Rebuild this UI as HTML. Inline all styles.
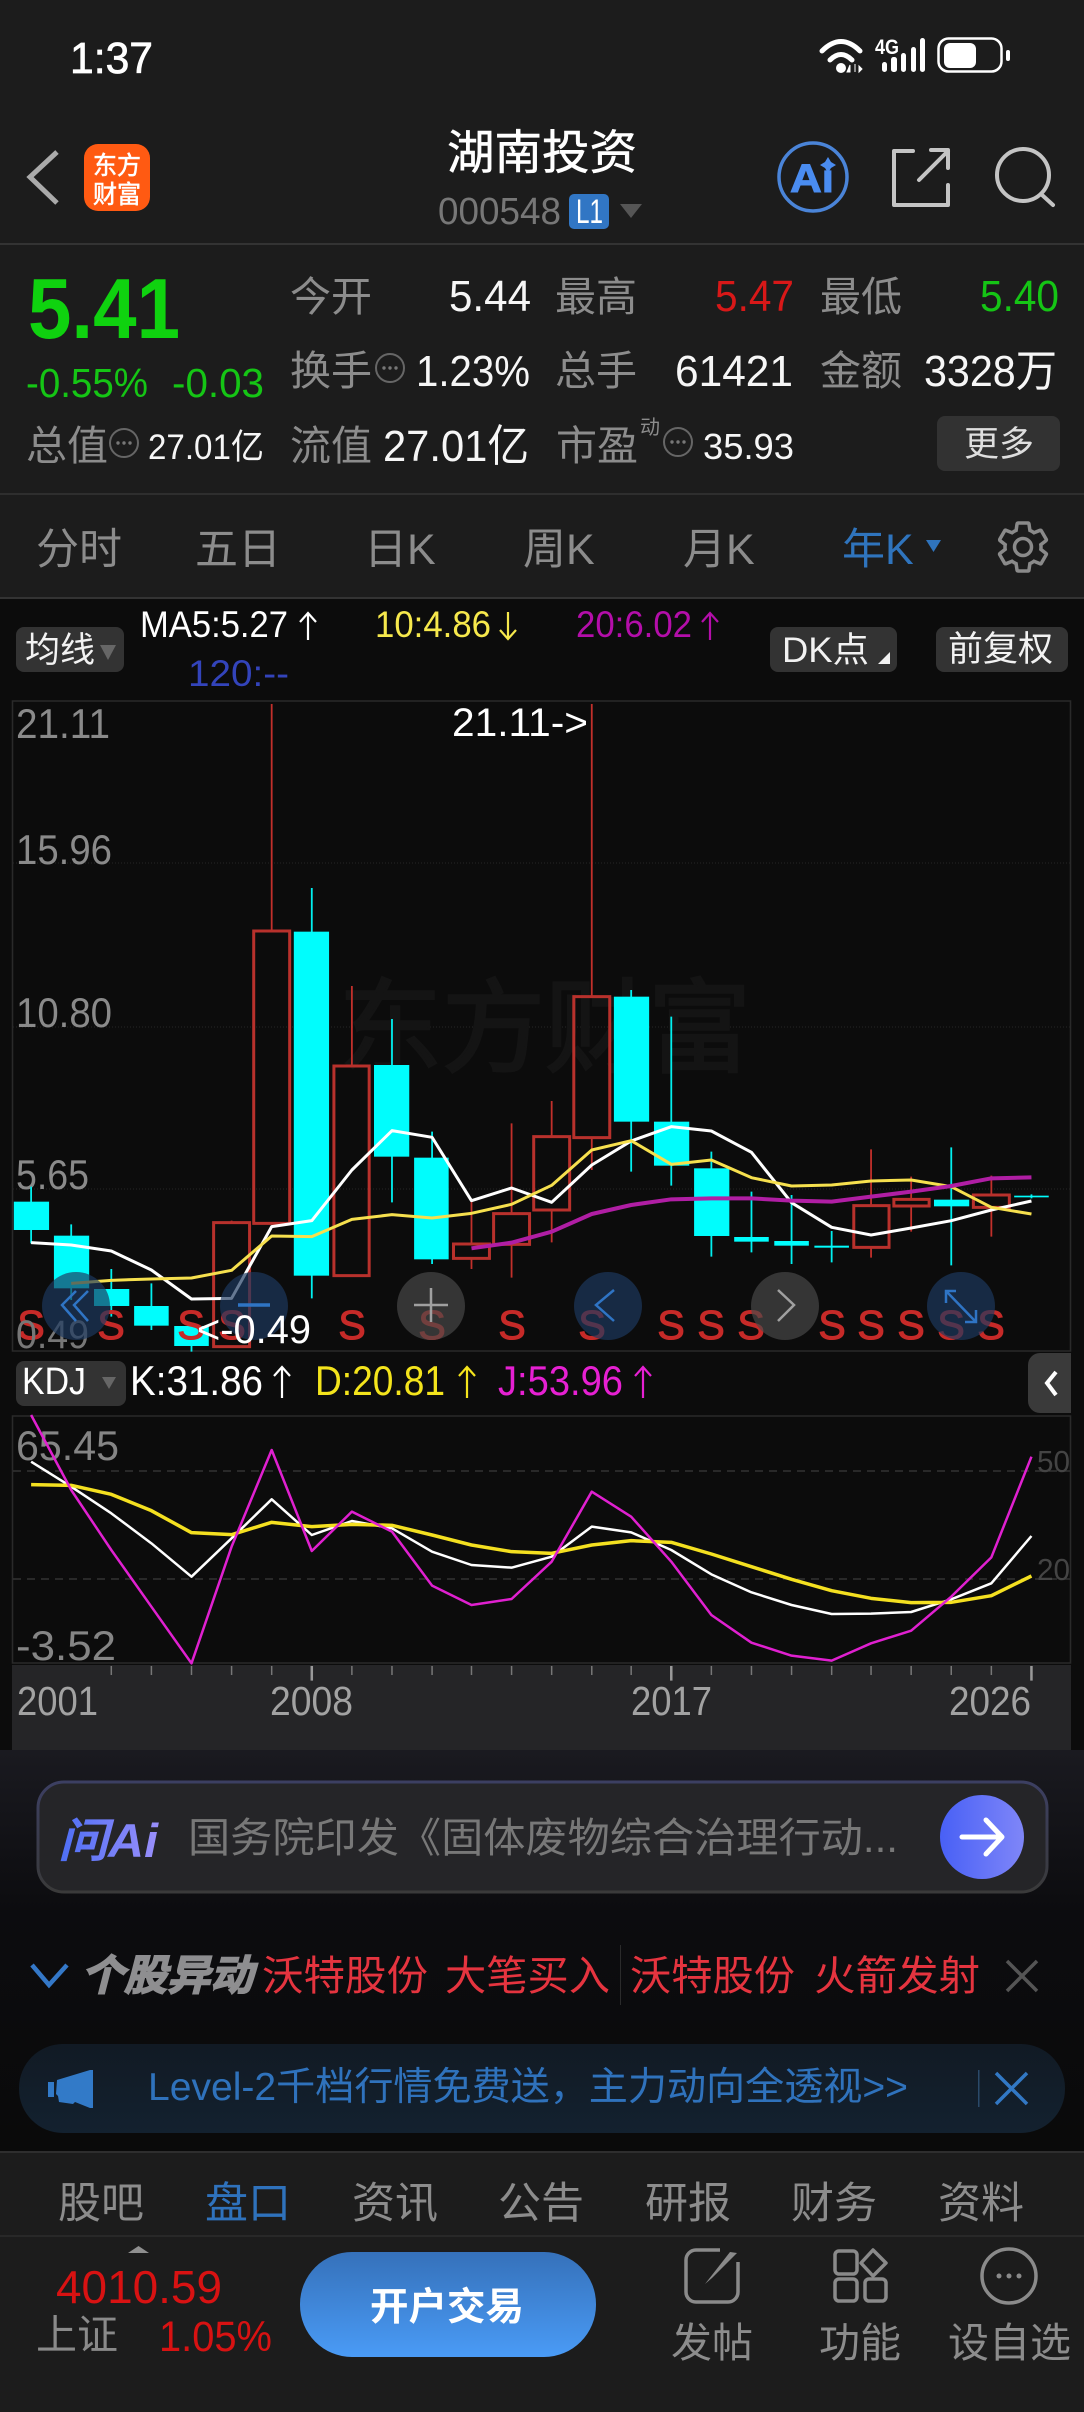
<!DOCTYPE html>
<html lang="zh"><head><meta charset="utf-8"><title>湖南投资</title>
<style>
html,body{margin:0;padding:0;background:#0c0c0c;width:1084px;height:2412px;overflow:hidden}
svg{display:block;position:absolute;left:0;top:0}
text{font-family:"Liberation Sans","Noto Sans CJK SC",sans-serif;white-space:pre}
.n{vector-effect:non-scaling-stroke;fill:none}
.g{fill:#8c8c8c}.w{fill:#f6f6f6}.cj{font-size:41px}
</style></head><body>
<svg width="1084" height="2412" viewBox="0 0 1084 2412">
<defs>
<linearGradient id="bg" x1="0" y1="0" x2="0" y2="1"><stop offset="0" stop-color="#1a1a20"/><stop offset=".4" stop-color="#0c0c0f"/><stop offset="1" stop-color="#0a0a0a"/></linearGradient>
<linearGradient id="aib" x1="0" y1="0" x2="0" y2="1"><stop offset="0" stop-color="#3c3f62"/><stop offset="1" stop-color="#3a3a3a"/></linearGradient>
<linearGradient id="arr" x1="0" y1="0" x2="1" y2="0"><stop offset="0" stop-color="#4860f6"/><stop offset="1" stop-color="#7f86f8"/></linearGradient>
<linearGradient id="ai" x1="0" y1="0" x2="1" y2="0"><stop offset="0" stop-color="#4c6ef5"/><stop offset="1" stop-color="#9a8ffb"/></linearGradient>
<linearGradient id="btn" x1="0" y1="0" x2="0" y2="1"><stop offset="0" stop-color="#3571ba"/><stop offset="1" stop-color="#4a9bf6"/></linearGradient>
<linearGradient id="lv" x1="0" y1="0" x2="0" y2="1"><stop offset="0" stop-color="#111a24"/><stop offset="1" stop-color="#13212f"/></linearGradient>
</defs>

<!-- backgrounds -->
<rect width="1084" height="598" fill="#1c1c1c"/>
<rect y="598" width="1084" height="1152" fill="#0c0c0c"/>
<rect y="1750" width="1084" height="402" fill="url(#bg)"/>
<rect y="2152" width="1084" height="260" fill="#1c1c1c"/>
<rect y="243" width="1084" height="2" fill="#333"/>
<rect y="493" width="1084" height="2" fill="#2e2e2e"/>
<rect y="597" width="1084" height="2" fill="#333"/>
<rect x="12" y="1665" width="1059" height="85" fill="#252527"/>

<!-- status bar -->
<text x="70" y="73" font-size="44" textLength="83" lengthAdjust="spacingAndGlyphs" fill="#fff" stroke="#fff" stroke-width=".7">1:37</text>
<g fill="none" stroke="#fff" stroke-width="5" stroke-linecap="round">
<path d="M822 51 Q841 32 860 51"/><path d="M830 60 Q841 49 852 60"/></g>
<circle cx="841" cy="68" r="5" fill="#fff"/>
<path d="M850 72v-7l-3 7zM855 64v8M859 66l3 3-3 3z" fill="#fff" stroke="#fff" stroke-width="1"/>
<text x="875" y="54" font-size="21" font-weight="bold" textLength="24" lengthAdjust="spacingAndGlyphs" fill="#fff">4G</text>
<g fill="#fff"><rect x="882" y="62" width="5" height="10" rx="2.5"/><rect x="891" y="57" width="6" height="15" rx="2.5"/><rect x="901" y="53" width="5" height="19" rx="2.5"/><rect x="911" y="47" width="5" height="25" rx="2.5"/><rect x="920" y="38" width="5" height="34" rx="2.5"/></g>
<rect x="938.5" y="38.5" width="63" height="33" rx="10" fill="none" stroke="#fff" stroke-width="2.5"/>
<rect x="944" y="43" width="32" height="25" rx="6" fill="#fff"/>
<rect x="1006" y="50" width="4" height="11" rx="2" fill="#fff"/>

<!-- nav -->
<path d="M57 152 L30 177 L57 203" fill="none" stroke="#aaa" stroke-width="5"/>
<rect x="84" y="144" width="66" height="67" rx="14" fill="#ff5a12"/>
<text x="93" y="174" font-size="25" fill="#fff" textLength="48" lengthAdjust="spacingAndGlyphs" stroke="#fff" stroke-width=".6">东方</text>
<text x="93" y="203" font-size="25" fill="#fff" textLength="48" lengthAdjust="spacingAndGlyphs" stroke="#fff" stroke-width=".6">财富</text>
<text x="447" y="169" font-size="47" fill="#fff" textLength="190" lengthAdjust="spacingAndGlyphs" stroke="#fff" stroke-width=".5">湖南投资</text>
<text x="438" y="224" font-size="38" fill="#777" textLength="123" lengthAdjust="spacingAndGlyphs">000548</text>
<rect x="569" y="194" width="40" height="35" rx="5" fill="#3176c4"/>
<text x="576" y="223" font-size="34" fill="#fff" textLength="27" lengthAdjust="spacingAndGlyphs">L1</text>
<path d="M620 204h22l-11 14z" fill="#555"/>
<circle cx="813" cy="177" r="34" fill="none" stroke="#4a84d8" stroke-width="3.5"/>
<text x="790" y="192" font-size="40" font-weight="bold" fill="#4a8cf0" textLength="44" lengthAdjust="spacingAndGlyphs" stroke="#4a8cf0" stroke-width="1">Ai</text>
<rect x="821" y="160" width="13" height="10" fill="#1c1c1c"/>
<path d="M828 157l3 5 5 3-5 3-3 5-3-5-5-3 5-3z" fill="#4a8cf0"/>
<g fill="none" stroke="#c4c4c4" stroke-width="4" stroke-linecap="round" stroke-linejoin="round">
<path d="M913 151H894V205H948V185"/><path d="M919 180L948 151"/><path d="M931 150H948V168"/>
<circle cx="1023" cy="175" r="26"/><path d="M1041 194L1053 205"/></g>

<!-- quote -->
<text x="28" y="338" font-size="85" font-weight="bold" fill="#0fd20f" textLength="152" lengthAdjust="spacingAndGlyphs">5.41</text>
<text x="26" y="397" font-size="41" fill="#15c515" textLength="122" lengthAdjust="spacingAndGlyphs">-0.55%</text>
<text x="172" y="397" font-size="41" fill="#15c515" textLength="92" lengthAdjust="spacingAndGlyphs">-0.03</text>

<g class="g cj"><text x="290" y="311" font-size="41">今开</text><text x="555" y="311" font-size="41">最高</text><text x="820" y="311" font-size="41">最低</text>
<text x="290" y="385" font-size="41">换手</text><text x="555" y="385" font-size="41">总手</text><text x="820" y="385" font-size="41">金额</text>
<text x="26" y="460" font-size="41">总值</text><text x="290" y="460" font-size="41">流值</text><text x="556" y="460" font-size="41">市盈</text>
<text x="640" y="434" font-size="20">动</text></g>

<g font-size="44"><text class="w" x="449" y="311" textLength="82" lengthAdjust="spacingAndGlyphs">5.44</text>
<text x="715" y="311" fill="#d81818" textLength="79" lengthAdjust="spacingAndGlyphs">5.47</text>
<text x="980" y="311" fill="#15c515" textLength="79" lengthAdjust="spacingAndGlyphs">5.40</text>
<text class="w" x="416" y="386" textLength="114" lengthAdjust="spacingAndGlyphs">1.23%</text>
<text class="w" x="675" y="386" textLength="118" lengthAdjust="spacingAndGlyphs">61421</text>
<text class="w" x="924" y="386" textLength="133" lengthAdjust="spacingAndGlyphs">3328万</text>
<text class="w" x="383" y="461" textLength="146" lengthAdjust="spacingAndGlyphs">27.01亿</text></g>
<text class="w" x="148" y="459" font-size="35" textLength="116" lengthAdjust="spacingAndGlyphs">27.01亿</text>
<text class="w" x="703" y="459" font-size="36" textLength="91" lengthAdjust="spacingAndGlyphs">35.93</text>

<g fill="none" stroke="#666" stroke-width="2"><circle cx="390" cy="368" r="14"/><circle cx="124" cy="443" r="14"/><circle cx="678" cy="442" r="14"/></g>
<g fill="#777"><circle cx="384" cy="368" r="1.7"/><circle cx="390" cy="368" r="1.7"/><circle cx="396" cy="368" r="1.7"/><circle cx="118" cy="443" r="1.7"/><circle cx="124" cy="443" r="1.7"/><circle cx="130" cy="443" r="1.7"/><circle cx="672" cy="442" r="1.7"/><circle cx="678" cy="442" r="1.7"/><circle cx="684" cy="442" r="1.7"/></g>
<rect x="937" y="416" width="123" height="55" rx="8" fill="#323232"/>
<text x="964" y="456" font-size="35" fill="#dedede">更多</text>

<!-- tabs -->
<g class="g" font-size="43"><text x="36" y="564">分时</text><text x="195" y="564">五日</text><text x="364" y="564">日K</text><text x="523" y="564">周K</text><text x="683" y="564">月K</text></g>
<text x="842" y="564" font-size="43" fill="#2f74bd">年K</text>
<path d="M926 540h15l-7.500 12z" fill="#2f74bd"/>
<g transform="translate(993 517) scale(2.5)" fill="none" stroke="#8a8a8a" stroke-width="1.4"><path d="M19.14 12.94c.04-.3.06-.61.06-.94 0-.32-.02-.64-.07-.94l2.03-1.58c.18-.14.23-.41.12-.61l-1.92-3.32c-.12-.22-.37-.29-.59-.22l-2.39.96c-.5-.38-1.03-.7-1.62-.94l-.36-2.54c-.04-.24-.24-.41-.48-.41h-3.84c-.24 0-.43.17-.47.41l-.36 2.54c-.59.24-1.13.57-1.62.94l-2.39-.96c-.22-.08-.47 0-.59.22L2.74 8.87c-.12.21-.08.47.12.61l2.03 1.58c-.05.3-.09.63-.09.94s.02.64.07.94l-2.03 1.58c-.18.14-.23.41-.12.61l1.92 3.32c.12.22.37.29.59.22l2.39-.96c.5.38 1.03.7 1.62.94l.36 2.54c.05.24.24.41.48.41h3.84c.24 0 .44-.17.47-.41l.36-2.54c.59-.24 1.13-.56 1.62-.94l2.39.96c.22.08.47 0 .59-.22l1.92-3.32c.12-.22.07-.47-.12-.61l-2.01-1.58z"/><circle cx="12" cy="12" r="3.4"/></g>

<!-- MA legend -->
<rect x="16" y="627" width="108" height="45" rx="8" fill="#333"/>
<text x="25" y="662" font-size="35" fill="#f2f2f2">均线</text><path d="M100 645h16l-8 15z" fill="#666"/>
<rect x="770" y="627" width="127" height="45" rx="8" fill="#333"/>
<text x="782" y="662" font-size="35" fill="#f2f2f2" textLength="87" lengthAdjust="spacingAndGlyphs">DK点</text><path d="M878 664h12v-12z" fill="#f2f2f2"/>
<rect x="936" y="627" width="132" height="45" rx="8" fill="#333"/>
<text x="948" y="661" font-size="35" fill="#f2f2f2">前复权</text>
<text x="140" y="637" font-size="37" fill="#fff" textLength="148" lengthAdjust="spacingAndGlyphs">MA5:5.27</text>
<path d="M308 640V614M300 622l8-9 8 9" fill="none" stroke="#fff" stroke-width="2.2"/>
<text x="375" y="637" font-size="37" fill="#f6e84c" textLength="116" lengthAdjust="spacingAndGlyphs">10:4.86</text>
<path d="M508 612V638M500 630l8 9 8-9" fill="none" stroke="#f6e84c" stroke-width="2.2"/>
<text x="576" y="637" font-size="37" fill="#b40eaa" textLength="116" lengthAdjust="spacingAndGlyphs">20:6.02</text>
<path d="M710 640V614M702 622l8-9 8 9" fill="none" stroke="#b40eaa" stroke-width="2.2"/>
<text x="188" y="686" font-size="37" fill="#3344bb" textLength="101" lengthAdjust="spacingAndGlyphs">120:--</text>

<!-- main chart frame -->
<rect x="12.500" y="701" width="1058" height="650" fill="none" stroke="#2a2a2a" stroke-width="1.500"/>
<g stroke="#262626" stroke-width="1" stroke-dasharray="1 2"><path d="M13 863H1070M13 1027H1070M13 1189H1070"/></g>
<text x="339" y="1064" textLength="412" lengthAdjust="spacingAndGlyphs" font-size="102" fill="#141414" stroke="#141414" stroke-width="2.500">东方财富</text>
<g font-size="42" fill="#8a8a8a"><text x="16" y="738" textLength="94" lengthAdjust="spacingAndGlyphs">21.11</text><text x="16" y="864" textLength="96" lengthAdjust="spacingAndGlyphs">15.96</text><text x="16" y="1027" textLength="96" lengthAdjust="spacingAndGlyphs">10.80</text><text x="16" y="1189" textLength="73" lengthAdjust="spacingAndGlyphs">5.65</text></g>

<g transform="matrix(.69132 0 0 .33333 0 900)">
<!-- wicks red -->
<g stroke="#c2302b" stroke-width="1.800" class="n">
<path class="n" d="M335 962V967M393 -588V93M509 258V498M682 900V1032M682 1075V1107M740 670V940M740 1033V1133M798 603V710M798 930V1027M856 -588V290M856 713V810M1260 748V917M1260 1042V1073M1318 830V898M1318 918V995M1434 827V885M1434 922V1010"/>
</g>
<!-- red bodies -->
<g stroke="#b8312c" stroke-width="3" fill="none">
<rect class="n" x="309" y="968" width="52" height="372"/><rect class="n" x="367" y="93" width="52" height="877"/><rect class="n" x="483" y="498" width="51" height="629"/><rect class="n" x="656" y="1032" width="52" height="43"/><rect class="n" x="714" y="941" width="52" height="92"/><rect class="n" x="772" y="710" width="52" height="220"/><rect class="n" x="830" y="290" width="52" height="423"/><rect class="n" x="1235" y="917" width="51" height="125"/><rect class="n" x="1293" y="898" width="51" height="20"/><rect class="n" x="1408" y="885" width="52" height="37"/>
</g>
<!-- cyan wicks -->
<path class="n" stroke="#00f0f0" stroke-width="1.800" d="M45 860V1030M103 973V1200M161 1107V1250M219 1150V1290M277 1280V1355M451 -36V1195M567 357V907M625 695V1092M913 270V815M971 350V857M1029 755V1070M1087 875V1057M1145 885V1092M1203 993V1087M1376 742V1096M1492 883V895"/>
<g fill="#00fdfd">
<rect x="20" y="905" width="51" height="85"/><rect x="78" y="1007" width="51" height="158"/><rect x="136" y="1167" width="51" height="51"/><rect x="194" y="1218" width="50" height="59"/><rect x="252" y="1278" width="50" height="60"/><rect x="425" y="95" width="51" height="1032"/><rect x="541" y="495" width="51" height="275"/><rect x="599" y="773" width="50" height="305"/><rect x="888" y="290" width="51" height="375"/><rect x="946" y="665" width="51" height="132"/><rect x="1004" y="805" width="51" height="203"/><rect x="1062" y="1011" width="50" height="14"/><rect x="1120" y="1023" width="50" height="14"/><rect x="1178" y="1037" width="50" height="6"/><rect x="1351" y="899" width="51" height="20"/><rect x="1467" y="887" width="50" height="5"/>
</g>
<polyline class="n" stroke="#fff" stroke-width="3" stroke-linejoin="round" points="45,1028 103,1035 161,1053 219,1110 277,1197 335,1195 393,980 451,962 509,810 567,692 625,712 682,902 740,864 798,907 856,795 913,723 971,680 1029,693 1087,757 1145,908 1203,982 1260,1005 1318,984 1376,962 1434,930 1492,903"/>
<polyline class="n" stroke="#f6e04e" stroke-width="3" stroke-linejoin="round" points="103,1150 161,1141 219,1137 277,1134 335,1111 393,1008 451,1010 509,958 567,944 625,954 682,940 740,913 798,856 856,750 913,722 971,793 1029,780 1087,833 1145,858 1203,855 1260,843 1318,840 1376,860 1434,922 1492,942"/>
<polyline class="n" stroke="#b01ea4" stroke-width="4" stroke-linejoin="round" points="682,1045 740,1028 798,995 856,942 913,915 971,898 1029,895 1087,895 1145,902 1203,905 1260,890 1318,875 1376,858 1434,835 1492,832"/>
</g>
<!-- S marks -->
<g font-size="41" fill="#c62a28" stroke="#c62a28" stroke-width="1.100" text-anchor="middle">
<text x="31" y="1339">S</text><text x="111" y="1339">S</text><text x="191" y="1339">S</text><text x="232" y="1339">S</text><text x="352" y="1339">S</text><text x="432" y="1339">S</text><text x="512" y="1339">S</text><text x="592" y="1339">S</text><text x="671" y="1339">S</text><text x="711" y="1339">S</text><text x="751" y="1339">S</text><text x="832" y="1339">S</text><text x="871" y="1339">S</text><text x="911" y="1339">S</text><text x="951" y="1339">S</text><text x="991" y="1339">S</text></g>
<text x="16" y="1348" font-size="40" fill="#777" textLength="73" lengthAdjust="spacingAndGlyphs">0.49</text>

<!-- floating controls -->
<g><circle cx="76" cy="1306" r="34" fill="#1d3a60" fill-opacity=".68"/><circle cx="254" cy="1306" r="34" fill="#1d3a60" fill-opacity=".68"/><circle cx="431" cy="1306" r="34" fill="#4a4a4a" fill-opacity=".68"/><circle cx="608" cy="1306" r="34" fill="#1d3a60" fill-opacity=".68"/><circle cx="785" cy="1306" r="34" fill="#4a4a4a" fill-opacity=".68"/><circle cx="961" cy="1306" r="34" fill="#1d3a60" fill-opacity=".68"/></g>
<g fill="none" stroke-width="2.500">
<path d="M76 1291L62 1305L76 1321M88 1291L74 1305L88 1321" stroke="#2f74c4"/>
<path d="M238 1305H270" stroke="#2f74c4" stroke-width="3.500"/>
<path d="M414 1305H448M431 1288V1322" stroke="#a0a0a0"/>
<path d="M614 1290L596 1305L614 1321" stroke="#2f74c4"/>
<path d="M778 1290L794 1305L778 1321" stroke="#a0a0a0"/>
<path d="M946 1291L976 1322M946 1303V1291H956M976 1310V1322H965" stroke="#2f74c4"/>
</g>
<text x="197" y="1343" font-size="40" fill="#fff" textLength="114" lengthAdjust="spacingAndGlyphs">&lt;-0.49</text>
<text x="452" y="736" font-size="40" fill="#fff" textLength="136" lengthAdjust="spacingAndGlyphs">21.11-&gt;</text>

<!-- KDJ header -->
<rect x="16" y="1361" width="110" height="45" rx="8" fill="#333"/>
<text x="22" y="1394" font-size="38" fill="#fff" textLength="64" lengthAdjust="spacingAndGlyphs">KDJ</text>
<path d="M102 1377h14l-7 12z" fill="#666"/>
<text x="130" y="1395" font-size="42" fill="#fff" textLength="133" lengthAdjust="spacingAndGlyphs">K:31.86</text>
<path d="M282 1398V1367M274 1376l8-9 8 9" fill="none" stroke="#fff" stroke-width="2.200"/>
<text x="315" y="1395" font-size="42" fill="#f4e41c" textLength="130" lengthAdjust="spacingAndGlyphs">D:20.81</text>
<path d="M467 1398V1367M459 1376l8-9 8 9" fill="none" stroke="#f4e41c" stroke-width="2.200"/>
<text x="498" y="1395" font-size="42" fill="#e620d2" textLength="125" lengthAdjust="spacingAndGlyphs">J:53.96</text>
<path d="M643 1398V1367M635 1376l8-9 8 9" fill="none" stroke="#e620d2" stroke-width="2.200"/>
<path d="M1071 1353H1040a12 12 0 0 0-12 12v36a12 12 0 0 0 12 12h31z" fill="#3a3a3a"/>
<path d="M1056 1372L1047 1383L1056 1395" fill="none" stroke="#fff" stroke-width="4"/>

<!-- KDJ chart -->
<rect x="12.500" y="1416" width="1058" height="247" fill="none" stroke="#2a2a2a" stroke-width="1.500"/>
<path d="M13 1471H1070M13 1579H1070" stroke="#333" stroke-width="1.500" stroke-dasharray="8 6"/>
<text x="16" y="1460" font-size="42" fill="#858585" textLength="103" lengthAdjust="spacingAndGlyphs">65.45</text>
<text x="16" y="1660" font-size="42" fill="#858585" textLength="100" lengthAdjust="spacingAndGlyphs">-3.52</text>
<text x="1037" y="1472" font-size="31" fill="#444" textLength="33" lengthAdjust="spacingAndGlyphs">50</text>
<text x="1037" y="1580" font-size="31" fill="#444" textLength="33" lengthAdjust="spacingAndGlyphs">20</text>
<g transform="matrix(.69132 0 0 .33333 0 1340)">
<polyline class="n" stroke="#fff" stroke-width="2.500" stroke-linejoin="round" points="45,365 103,440 161,520 219,610 277,710 335,595 393,478 451,585 509,543 567,565 625,635 682,675 740,683 798,650 856,560 913,577 971,630 1029,703 1087,757 1145,795 1203,822 1260,821 1318,816 1376,778 1434,730 1492,588"/>
<polyline class="n" stroke="#f4e020" stroke-width="3.500" stroke-linejoin="round" points="45,434 103,436 161,463 219,512 277,578 335,584 393,547 451,560 509,553 567,556 625,585 682,615 740,635 798,640 856,615 913,602 971,607 1029,642 1087,680 1145,718 1203,752 1260,775 1318,788 1376,787 1434,767 1492,708"/>
<polyline class="n" stroke="#e020d0" stroke-width="2.500" stroke-linejoin="round" points="45,225 103,450 161,630 219,800 277,970 335,620 393,330 451,633 509,515 567,575 625,737 682,795 740,777 798,665 856,455 913,530 971,665 1029,825 1087,908 1145,947 1203,962 1260,910 1318,872 1376,770 1434,652 1492,350"/>
<path class="n" stroke="#777" stroke-width="1.500" d="M161 978V1005M219 978V1005M277 978V1005M335 978V1005M393 978V1005M509 978V1005M567 978V1005M625 978V1005M682 978V1005M740 978V1005M798 978V1005M856 978V1005M913 978V1005M1029 978V1005M1087 978V1005M1145 978V1005M1203 978V1005M1260 978V1005M1318 978V1005M1376 978V1005M1434 978V1005"/>
<path class="n" stroke="#999" stroke-width="2.500" d="M451 978V1022M971 978V1022M1492 978V1022"/>
</g>
<g font-size="41" fill="#a2a2a2"><text x="17" y="1715" textLength="81" lengthAdjust="spacingAndGlyphs">2001</text><text x="270" y="1715" textLength="83" lengthAdjust="spacingAndGlyphs">2008</text><text x="631" y="1715" textLength="81" lengthAdjust="spacingAndGlyphs">2017</text><text x="949" y="1715" textLength="82" lengthAdjust="spacingAndGlyphs">2026</text></g>

<!-- AI box -->
<rect x="38" y="1782" width="1009" height="110" rx="26" fill="#252528" stroke="url(#aib)" stroke-width="3"/>
<text x="58" y="1857" font-size="47" font-weight="bold" font-style="italic" fill="url(#ai)" textLength="100" lengthAdjust="spacingAndGlyphs">问Ai</text>
<text x="188" y="1852" font-size="41" fill="#787878" textLength="710" lengthAdjust="spacingAndGlyphs">国务院印发《固体废物综合治理行动...</text>
<circle cx="982" cy="1837" r="42" fill="url(#arr)"/>
<path d="M962 1837H1001M986 1820L1002 1837L986 1854" fill="none" stroke="#fff" stroke-width="5" stroke-linecap="round" stroke-linejoin="round"/>

<!-- 个股异动 -->
<path d="M32 1965L49 1985L67 1965" fill="none" stroke="#3478c8" stroke-width="4.500"/>
<text x="81" y="1990" font-size="42" font-weight="bold" font-style="italic" fill="#8e8e90" textLength="172" lengthAdjust="spacingAndGlyphs" stroke="#8e8e90" stroke-width="1.600">个股异动</text>
<g font-size="41" fill="#e5343f"><text x="262" y="1990" textLength="166" lengthAdjust="spacingAndGlyphs">沃特股份</text><text x="445" y="1990" textLength="165" lengthAdjust="spacingAndGlyphs">大笔买入</text><text x="630" y="1990" textLength="165" lengthAdjust="spacingAndGlyphs">沃特股份</text><text x="814" y="1990" textLength="166" lengthAdjust="spacingAndGlyphs">火箭发射</text></g>
<rect x="620" y="1945" width="1" height="60" fill="#2b2b2b"/>
<path d="M1007 1961L1037 1991M1037 1961L1007 1991" stroke="#555" stroke-width="3.500"/>

<!-- level2 -->
<rect x="19" y="2044" width="1046" height="89" rx="44" fill="url(#lv)"/>
<path d="M48 2082h6v15h-6zM57 2080L90 2070h3V2108h-3L75 2102l-2 2-14-2-1-6-2-2z" fill="#327ac8"/>
<text x="148" y="2100" font-size="39" fill="#2f72bc" textLength="760" lengthAdjust="spacingAndGlyphs">Level-2千档行情免费送，主力动向全透视&gt;&gt;</text>
<rect x="978" y="2070" width="1.500" height="37" fill="#2a4a6a"/>
<path d="M996 2073L1027 2104M1027 2073L996 2104" stroke="#3278c4" stroke-width="3.500"/>

<!-- bottom -->
<rect y="2151" width="1084" height="2" fill="#2e2e2e"/>
<g class="g" font-size="43"><text x="58" y="2218">股吧</text><text x="352" y="2218">资讯</text><text x="498" y="2218">公告</text><text x="645" y="2218">研报</text><text x="791" y="2218">财务</text><text x="938" y="2218">资料</text></g>
<text x="205" y="2218" font-size="43" fill="#2f72bc">盘口</text>
<rect y="2235" width="1084" height="2" fill="#282828"/>
<path d="M128 2253L138.500 2246L149 2253z" fill="#8f8f8f"/>
<text x="56" y="2303" font-size="46" fill="#d81212" textLength="166" lengthAdjust="spacingAndGlyphs">4010.59</text>
<text x="36" y="2349" font-size="41" fill="#8a8a8a">上证</text>
<text x="159" y="2351" font-size="43" fill="#d81212" textLength="113" lengthAdjust="spacingAndGlyphs">1.05%</text>
<rect x="300" y="2252" width="296" height="105" rx="52" fill="url(#btn)"/>
<text x="370" y="2320" font-size="38.500" font-weight="bold" fill="#fff">开户交易</text>
<g fill="none" stroke="#8a8a8a" stroke-width="3.500" stroke-linejoin="round">
<path d="M720 2250H696a10 10 0 0 0-10 10V2292a10 10 0 0 0 10 10H728a10 10 0 0 0 10-10V2262"/>
<rect x="835" y="2251" width="22" height="23" rx="4"/><rect x="835" y="2279" width="22" height="22" rx="4"/><rect x="865" y="2279" width="21" height="22" rx="4"/>
<path d="M873 2250L886 2263L873 2276L861 2263z"/>
<circle cx="1009" cy="2276" r="27"/></g>
<path d="M705 2284L730 2252L737 2253L712 2278z" fill="#8a8a8a"/>
<g fill="#8a8a8a"><circle cx="999" cy="2276" r="2.500"/><circle cx="1009" cy="2276" r="2.500"/><circle cx="1019" cy="2276" r="2.500"/></g>
<g class="g" font-size="41"><text x="671" y="2357">发帖</text><text x="819" y="2357">功能</text><text x="948" y="2357">设自选</text></g>
</svg>
</body></html>
